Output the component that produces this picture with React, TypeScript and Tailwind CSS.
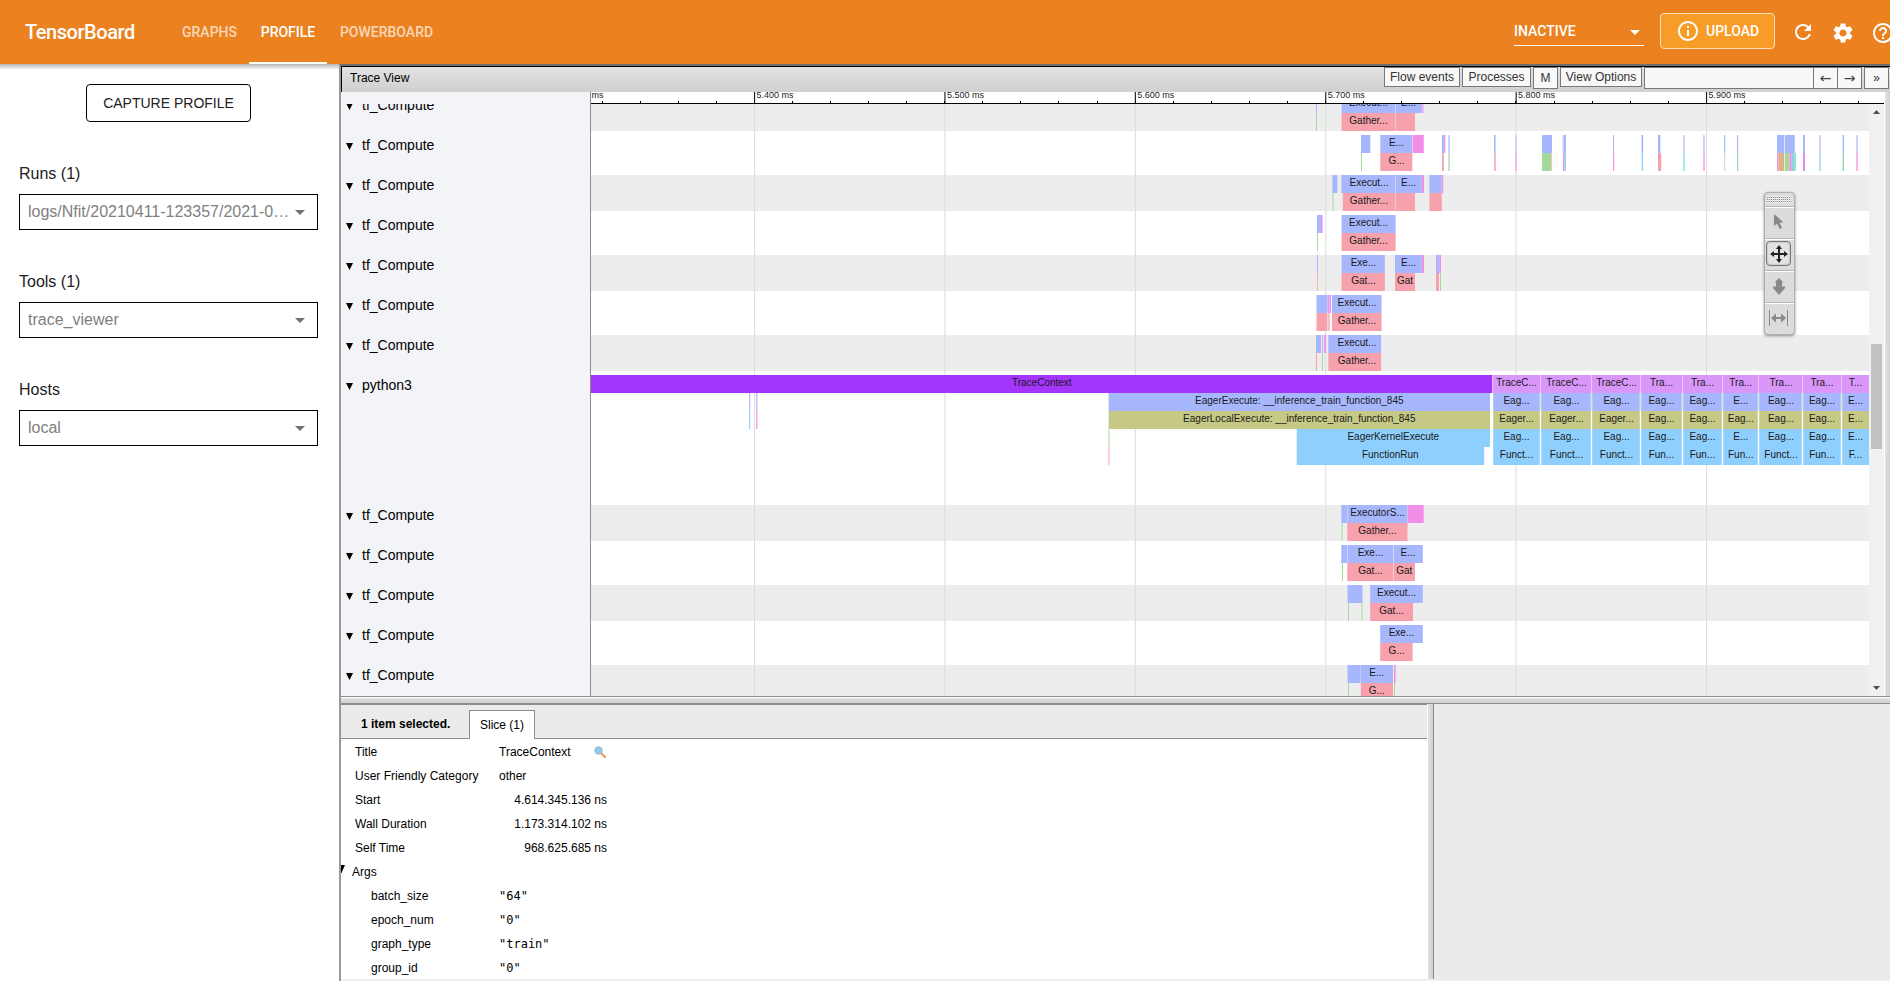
import React from "react";
import { MdInfoOutline, MdRefresh, MdSettings, MdHelpOutline } from "react-icons/md";

const B = "#a7b7fd";
const R = "#f6a1ac";
const P = "#f28ee8";
const G = "#a4d99b";
const O = "#f3b9a2";
const LB = "#cdd5fc";
const LG = "#c9e6c4";
const LP = "#f6b6f0";
const SKY = "#8fcffd";

// [x, width, fill, label?, label centre?]
type Slice = [number, number, string, string?, number?];
type Track = { y: number; rows: Slice[][] };

const tracks: Track[] = [
  { y: 95, rows: [
    [[1316, 1, B], [1341.6, 53.6, B, "Execut...", 1368.5], [1395.6, 26.6, B, "E...", 1408.5], [1422, 2, LP]],
    [[1316, 1, G], [1341.6, 53.6, R, "Gather...", 1368.5], [1395.6, 19.4, R]],
  ] },
  { y: 135, rows: [
    [[1361, 9.3, B], [1380.3, 32, B, "E...", 1396.5], [1412.6, 11.2, P], [1442, 2.2, B], [1444.2, 1.2, P], [1448, 2, LB], [1494, 1, B], [1495, 1, LB], [1515, 2, LB], [1542, 10, B], [1562.5, 1, LB], [1563.5, 2.5, B], [1613, 1, B], [1641.5, 1.6, B], [1658, 2.4, B], [1683, 2, LB], [1703, 2, LB], [1724, 1.2, B], [1737, 1.2, B], [1777, 7.2, B], [1784.8, 10, B], [1803, 2, B], [1819, 2, LB], [1842.6, 1.4, B], [1856, 2, LB]],
    [[1361, 1, G], [1380.3, 32, R, "G...", 1396.5], [1442, 1.8, R], [1448, 2, LG], [1494, 1, O], [1495, 1, LP], [1515, 2, LP], [1542, 9.3, G], [1551.3, 0.8, O], [1563, 1.4, P], [1564.4, 1.6, SKY], [1613, 1.2, P], [1641.5, 1.6, "#9bd8f8"], [1658, 3.2, R], [1683, 2, "#ace9e7"], [1703, 2, LP], [1724, 1.2, LG], [1737, 1.2, "#8cdcc8"], [1777, 1.4, P], [1778.4, 5.8, "#deb184"], [1784.8, 4.8, G], [1789.6, 2.2, P], [1791.8, 2.2, "#8bd1e8"], [1794, 2, "#9be0cb"], [1803, 2, "#e08bf0"], [1819, 2, "#b5e0fb"], [1842.6, 1.4, "#8fdcaa"], [1856, 2, LP]],
  ] },
  { y: 175, rows: [
    [[1332.4, 5, B], [1341.3, 53.9, B, "Execut...", 1369], [1395.6, 26.2, B, "E...", 1408.5], [1422, 2, P], [1429.4, 12.2, B], [1441.7, 1.5, P]],
    [[1332, 2, LG], [1342.8, 52.4, R, "Gather...", 1369], [1395.6, 19.4, R], [1429.4, 12.4, R]],
  ] },
  { y: 215, rows: [
    [[1317, 4, B], [1321, 1.6, P], [1341.6, 54, B, "Execut...", 1368.5]],
    [[1317, 1, G], [1341.6, 54, R, "Gather...", 1368.5]],
  ] },
  { y: 255, rows: [
    [[1317, 1, B], [1341.6, 43.2, B, "Exe...", 1363.5], [1395, 26.8, B, "E...", 1408.5], [1422, 2, P], [1436, 3.3, B], [1439.3, 1.7, P]],
    [[1317, 1, O], [1341.6, 43.2, R, "Gat...", 1363.5], [1395, 20, R, "Gat", 1405], [1436, 3, R], [1440, 1, G]],
  ] },
  { y: 295, rows: [
    [[1316.5, 10.8, B], [1327.3, 2.4, "#d3a4f6"], [1329.7, 1.4, P], [1332, 49.6, B, "Execut...", 1357]],
    [[1316.5, 10.8, R], [1327.6, 2.2, "#f6b9bd"], [1332, 49.6, R, "Gather...", 1357]],
  ] },
  { y: 335, rows: [
    [[1316, 5, B], [1322, 1, B], [1324, 2, P], [1328.4, 52.8, B, "Execut...", 1357]],
    [[1316, 1, R], [1322, 1, G], [1328.4, 52.8, R, "Gather...", 1357]],
  ] },
  { y: 505, rows: [
    [[1341.3, 5.9, B], [1347.5, 60, B, "ExecutorS...", 1377.5], [1407.7, 16, P]],
    [[1341, 2, LG], [1347.3, 60.2, R, "Gather...", 1377.5]],
  ] },
  { y: 545, rows: [
    [[1341.3, 5.9, B], [1347.5, 45.7, B, "Exe...", 1370.5], [1393.6, 29.2, B, "E...", 1408]],
    [[1342, 1, G], [1347.3, 45.9, R, "Gat...", 1370.5], [1393.6, 21.4, R, "Gat", 1404.3]],
  ] },
  { y: 585, rows: [
    [[1347.5, 15, B], [1370.2, 52.6, B, "Execut...", 1396.5]],
    [[1348, 1, G], [1361, 2, LG], [1370.2, 42.8, R, "Gat...", 1391.5]],
  ] },
  { y: 625, rows: [
    [[1380.2, 42.6, B, "Exe...", 1401.5]],
    [[1380.2, 32.4, R, "G...", 1396.5]],
  ] },
  { y: 665, rows: [
    [[1347.5, 13, B], [1360.8, 32.2, B, "E...", 1376.8], [1394, 1.6, P]],
    [[1348, 1, G], [1360.8, 32.2, R, "G...", 1376.8], [1394, 1, G]],
  ] },
];

const stepEdges = [1492.6, 1540.6, 1591.6, 1640.6, 1682.6, 1722.6, 1758.6, 1802.6, 1841.6, 1869];
const stepCentres = [1516.5, 1566.5, 1616.5, 1661.5, 1702.5, 1740.8, 1781, 1822, 1855.5];
const stepLabels = [
  ["TraceC...", "TraceC...", "TraceC...", "Tra...", "Tra...", "Tra...", "Tra...", "Tra...", "T..."],
  ["Eag...", "Eag...", "Eag...", "Eag...", "Eag...", "E...", "Eag...", "Eag...", "E..."],
  ["Eager...", "Eager...", "Eager...", "Eag...", "Eag...", "Eag...", "Eag...", "Eag...", "E..."],
  ["Eag...", "Eag...", "Eag...", "Eag...", "Eag...", "E...", "Eag...", "Eag...", "E..."],
  ["Funct...", "Funct...", "Funct...", "Fun...", "Fun...", "Fun...", "Funct...", "Fun...", "F..."],
];
const stepFills = ["#da97fa", B, "#c6c886", SKY, SKY];

const steps = (level: number): Slice[] =>
  stepLabels[level].map((label, i) => {
    const left = stepEdges[i] + (level === 0 ? 0.2 : 0.6);
    const right = stepEdges[i + 1] - (i === 8 ? 0 : level === 0 ? 0.2 : 0.8);
    return [left, right - left, stepFills[level], label, stepCentres[i]];
  });

tracks.push({
  y: 375,
  rows: [
    [[591, 901.3, "#a435fa", "TraceContext", 1041.8], ...steps(0)],
    [[749, 1, "#b9c3f8"], [750, 1, "#e6eafe"], [756, 1, "#b9c3f8"], [757, 1, "#dbe1fd"], [1108.6, 381.4, B, "EagerExecute: __inference_train_function_845", 1299.3], ...steps(1), ...stepEdges.slice(1, 9).map((x): Slice => [x - 0.8, 1, LG])],
    [[749, 1, "#a8d4f8"], [750, 1, "#def1fe"], [756, 1, "#f3a6ea"], [757, 1, "#f9d3f5"], [1108.6, 381.4, "#c6c886", "EagerLocalExecute: __inference_train_function_845", 1299.3], ...steps(2)],
    [[1108, 2, "#d2ecce"], [1296.7, 193.3, SKY, "EagerKernelExecute", 1393.3], ...steps(3)],
    [[1108, 2, "#fad0d4"], [1296.7, 187.5, SKY, "FunctionRun", 1390.3], ...steps(4)],
  ],
});

const stripes = [95, 175, 255, 335, 505, 585, 665];
const majors = [754.5, 944.9, 1135.3, 1325.7, 1516.1, 1706.5];
const majorLabels = ["5.400 ms", "5.500 ms", "5.600 ms", "5.700 ms", "5.800 ms", "5.900 ms"];

function Timeline() {
  return (
    <svg viewBox="591 104 1278 592" className="block h-[592px] w-[1278px] shrink-0 bg-white font-['Liberation_Sans',sans-serif] text-[10px]">
      {stripes.map((y) => <rect key={y} x={591} y={y} width={1278} height={36} fill="#ededed" />)}
      {majors.map((x) => <rect key={x} x={x - 0.5} y={104} width={1.1} height={592} fill="#dedede" />)}
      {tracks.map((t) => t.rows.map((row, r) => row.map(([x, w, fill, label, cx], i) => (
        <g key={`${t.y}-${r}-${i}`}>
          <rect x={x} y={t.y + r * 18} width={w} height={18} fill={fill} />
          {label && <text x={cx} y={t.y + r * 18 + 10.6} textAnchor="middle" fill="#1a1a1a">{label}</text>}
        </g>
      ))))}
    </svg>
  );
}

function Ruler() {
  const minors = Array.from({ length: 34 }, (_, i) => 602 + i * 38.08).filter((x) => x < 1884);
  return (
    <svg viewBox="591 92 1293 12" className="block h-3 w-[1293px] shrink-0 bg-white font-['Liberation_Sans',sans-serif] text-[9px]">
      <text x={591.5} y={97.5} fill="#222">ms</text>
      {minors.map((x) => <rect key={x} x={Math.round(x - 0.5)} y={101} width={1} height={2} fill="#000" />)}
      {majors.map((x, i) => (
        <g key={x}>
          <rect x={x - 0.5} y={92} width={1.1} height={12} fill="#111" />
          <text x={x + 2} y={97.5} fill="#222">{majorLabels[i]}</text>
        </g>
      ))}
      <rect x={591} y={103} width={1293} height={1} fill="#000" />
    </svg>
  );
}

function TrackLabel({ children, tall = false }: { children: string; tall?: boolean }) {
  return (
    <div className={tall ? "h-[130px]" : "h-10"}>
      <div className="flex h-5 items-center">
        <svg viewBox="0 0 7 7" className="mt-0.5 ml-[5px] h-[7px] w-[7px]"><path d="M0 0h7L3.5 7z" /></svg>
        <span className="ml-[9px] text-sm leading-5">{children}</span>
      </div>
    </div>
  );
}

function Select({ label, value }: { label: string; value: string }) {
  return (
    <div className="mb-[39px] font-['Liberation_Sans',sans-serif]">
      <div className="flex h-6 items-center pt-0.5 text-base text-[#212121]">{label}</div>
      <div className="mt-[9px] flex h-9 w-[299px] items-center border border-black pl-2 text-base text-[#808080]">
        <span className="w-[261px] whitespace-nowrap">{value}</span>
        <svg viewBox="0 0 10 5" className="ml-[6px] h-[5px] w-[10px]" fill="#737373"><path d="M0 0h10L5 5z" /></svg>
      </div>
    </div>
  );
}

function Palette() {
  return (
    <div className="absolute top-[100px] left-[1423px] flex h-[143px] w-[31px] flex-col rounded-[4px] border border-[#b0b0b0] bg-[#dcdcdc] shadow-[0_1px_3px_rgba(0,0,0,0.4)]">
      <div className="flex h-[14px] items-center justify-center border-b border-[#b5b5b5] pr-0.5">
        <svg viewBox="0 0 24 7" className="h-[7px] w-6">
          {[0, 2, 4, 6].map((y) => <path key={y} d={`M0 ${y + 0.5}H24`} stroke="#fff" strokeDasharray="1 1" />)}
          {[1, 3, 5].map((y) => <path key={y} d={`M0 ${y + 0.5}H24`} stroke="#888" strokeDasharray="1 1" />)}
        </svg>
      </div>
      <div className="flex h-8 items-center justify-center border-t border-b border-t-white border-b-[#b5b5b5] pr-0.5 pb-0.5">
        <svg viewBox="0 0 11 16" className="h-4 w-[11px]" fill="#888"><path d="M1 0v12l3-2.500 2.800 5.500 2.200-1L6.500 8.500H10.500z" /></svg>
      </div>
      <div className="flex h-8 items-center border-t border-b border-t-white border-b-[#b5b5b5] pb-[3px]">
        <div className="ml-px flex h-[25px] w-[25px] items-center justify-center rounded-[4px] border border-[#777] bg-[#e3e3e3] shadow-[inset_0_0_2px_#999]">
          <svg viewBox="0 0 18 18" className="h-[18px] w-[18px] shrink-0" fill="#222"><path d="M9 0l3 4h-2v4h4V6l4 3-4 3v-2h-4v4h2l-3 4-3-4h2v-4H4v2L0 9l4-3v2h4V4H6z" /></svg>
        </div>
      </div>
      <div className="flex h-8 items-center justify-center border-t border-b border-t-white border-b-[#b5b5b5] pr-0.5 pb-0.5">
        <svg viewBox="0 0 12 17" className="h-[17px] w-3" fill="#888"><path d="M6 0l4.300 4.200H9V8.500h3V10L6 17 0 10V8.500h3V4.200H1.700z" /></svg>
      </div>
      <div className="flex h-[30px] items-center justify-center border-t border-t-white pr-0.5 pb-0.5">
        <svg viewBox="0 0 19 16" className="h-4 w-[19px]" fill="#888"><path d="M0 0h1v16H0zM18 0h1v16h-1zM2 8l5-4.500V7h5V3.500L17 8l-5 4.500V9H7v3.500z" /></svg>
      </div>
    </div>
  );
}

function DetailRow({ name, value }: { name: string; value: React.ReactNode }) {
  return (
    <div className="flex h-6 items-center text-xs">
      <span className="ml-[14px] w-[144px]">{name}</span>
      <span className="w-[108px]">{value}</span>
    </div>
  );
}

const args: [string, string][] = [
  ["batch_size", '"64"'],
  ["epoch_num", '"0"'],
  ["graph_type", '"train"'],
  ["group_id", '"0"'],
];

const toolButton = "flex items-center justify-center border border-[#777] bg-[#f8f8f8] text-xs text-[#333]";

export default function App() {
  return (
    <div className="flex h-[981px] w-[1890px] flex-col overflow-hidden bg-white font-[Roboto,sans-serif]">
      <header className="z-10 flex h-16 shrink-0 items-center bg-[#ec811f] text-white">
        <h1 className="ml-[25px] w-[145px] shrink-0 text-[20px] font-medium tracking-[-0.45px]">TensorBoard</h1>
        <nav className="flex h-16 shrink-0 text-[14px] font-medium">
          <span className="flex w-[79px] items-center justify-center text-white/70">GRAPHS</span>
          <span className="flex w-[78px] items-center justify-center border-b-2 border-white pt-0.5">PROFILE</span>
          <span className="flex w-[119px] items-center justify-center text-white/70">POWERBOARD</span>
        </nav>
        <div className="ml-[1068px] flex h-[27px] w-[130px] shrink-0 items-start justify-between border-b border-white pr-1 text-[14px]">
          <span className="leading-[25px] font-medium">INACTIVE</span>
          <svg viewBox="0 0 10 5" className="mt-[11px] h-[5px] w-[10px]" fill="#fff"><path d="M0 0h10L5 5z" /></svg>
        </div>
        <button className="mb-0.5 ml-4 flex h-9 w-[115px] shrink-0 items-center rounded-[4px] border border-[#fce0bd] bg-[#f79c27] pl-[15px] text-[14px] font-medium">
          <MdInfoOutline className="h-6 w-6 shrink-0" />
          <span className="ml-1.5">UPLOAD</span>
        </button>
        <MdRefresh className="ml-4 h-6 w-6 shrink-0" />
        <MdSettings className="mt-0.5 ml-4 h-6 w-6 shrink-0" />
        <MdHelpOutline className="mt-0.5 ml-4 h-6 w-6 shrink-0" />
      </header>

      <div className="flex h-[917px]">
        <aside className="w-[339px] shrink-0 bg-[linear-gradient(#b5b5b5,#fff_6px)] pt-5 pl-[19px]">
          <button className="mb-10 ml-[67px] flex h-[38px] w-[165px] items-center justify-center rounded-[4px] border border-black font-['Liberation_Sans',sans-serif] text-sm text-[#212121]">CAPTURE PROFILE</button>
          <div className="-mt-px">
            <Select label="Runs (1)" value="logs/Nfit/20210411-123357/2021-0…" />
            <Select label="Tools (1)" value="trace_viewer" />
            <Select label="Hosts" value="local" />
          </div>
        </aside>

        <main className="flex w-[1551px] shrink-0 flex-col border-t-2 border-l-2 border-t-[#6f6f6f] border-l-[#999] font-['Liberation_Sans',sans-serif] text-black">
          <div className="flex h-[26px] shrink-0 items-start border-t border-l border-black bg-linear-to-b from-[#e2e2e2] to-[#d0d0d0]">
            <span className="ml-2 w-[1034px] shrink-0 pt-[3px] text-xs leading-4">Trace View</span>
            <div className={`${toolButton} h-5 w-[76px] shrink-0`}>Flow events</div>
            <div className={`${toolButton} ml-0.5 h-5 w-[69px] shrink-0`}>Processes</div>
            <div className={`${toolButton} ml-0.5 h-[22px] w-[25px] shrink-0`}>M</div>
            <div className={`${toolButton} ml-0.5 h-5 w-[82px] shrink-0`}>View Options</div>
            <div className="ml-0.5 flex h-[22px] w-[218px] shrink-0 justify-end border border-[#777] bg-[#f8f8f8] font-['DejaVu_Sans',sans-serif] text-[14px] text-[#444]">
              <span className="flex w-6 items-center justify-center border-l border-[#777] leading-5">←</span>
              <span className="flex w-6 items-center justify-center border-l border-[#777] leading-5">→</span>
            </div>
            <div className={`${toolButton} ml-0.5 h-[22px] w-[25px] shrink-0`}>»</div>
          </div>

          <div className="relative flex h-[604px] shrink-0">
            <div className="flex h-full w-[250px] shrink-0 flex-col border-r border-[#8e8e8e] bg-[#f3f4f7] pt-3">
              <div className="h-[592px] overflow-hidden">
                <div className="-mt-[9px]">
                  {Array.from({ length: 7 }, (_, i) => <TrackLabel key={i}>tf_Compute</TrackLabel>)}
                  <TrackLabel tall>python3</TrackLabel>
                  {Array.from({ length: 5 }, (_, i) => <TrackLabel key={i}>tf_Compute</TrackLabel>)}
                </div>
              </div>
            </div>
            <div className="flex w-[1293px] shrink-0 flex-col">
              <Ruler />
              <div className="flex">
                <Timeline />
                <div className="flex h-[592px] w-[15px] shrink-0 flex-col items-center bg-[#f1f1f1]">
                  <svg viewBox="0 0 7 4" className="mt-[6px] h-1 w-[7px]" fill="#505050"><path d="M0 4h7L3.500 0z" /></svg>
                  <div className="mt-[230px] h-[105px] w-[11px] bg-[#c1c1c1]" />
                  <svg viewBox="0 0 7 4" className="mt-[237px] h-1 w-[7px]" fill="#505050"><path d="M0 0h7L3.500 4z" /></svg>
                </div>
              </div>
            </div>
            <div className="w-1.5 border-l border-white bg-linear-to-r from-[#e2e2e2] to-[#cfcfcf]" />
            <Palette />
          </div>

          <div className="h-2 shrink-0 border-t border-b border-[#8e8e8e] bg-[linear-gradient(#fff_1px,#e2e2e2_1px,#cfcfcf)]" />

          <div className="flex h-[275px] shrink-0">
            <section className="flex w-[1086px] shrink-0 flex-col border-t border-[#8e8e8e] bg-white">
              <div className="flex h-[34px] shrink-0 items-end border-b border-[#8e8e8e] bg-[#ebebeb] text-xs">
                <span className="ml-5 w-[108px] leading-7 font-bold">1 item selected.</span>
                <span className="-mb-px flex h-[29px] w-[66px] items-center justify-center border border-b-0 border-[#8e8e8e] bg-white">Slice (1)</span>
              </div>
              <div className="flex flex-col">
                <div className="flex h-[25px] items-center text-xs">
                  <span className="ml-[14px] w-[144px]">Title</span>
                  <span className="w-[95px]">TraceContext</span>
                  <svg viewBox="0 0 12 12" className="h-3 w-3"><path d="M7.500 7.500l3.500 3.500" stroke="#eb9a3c" strokeWidth="2" strokeLinecap="round" /><circle cx="4.500" cy="4.500" r="3.800" fill="#8ecbf0" stroke="#a5b9c8" strokeWidth="1" /></svg>
                </div>
                <DetailRow name="User Friendly Category" value="other" />
                <DetailRow name="Start" value={<span className="block text-right">4.614.345.136 ns</span>} />
                <DetailRow name="Wall Duration" value={<span className="block text-right">1.173.314.102 ns</span>} />
                <DetailRow name="Self Time" value={<span className="block text-right">968.625.685 ns</span>} />
                <div className="flex h-6 items-center text-xs">
                  <svg viewBox="0 0 4 8" className="mb-1.5 h-2 w-1"><path d="M0 0h4L0.500 8H0z" /></svg>
                  <span className="ml-[7px]">Args</span>
                </div>
                {args.map(([k, v]) => (
                  <div key={k} className="flex h-6 items-center text-xs">
                    <span className="ml-[30px] w-32">{k}</span>
                    <span className="font-['DejaVu_Sans_Mono',monospace]">{v}</span>
                  </div>
                ))}
              </div>
            </section>
            <div className="w-[7px] shrink-0 border-r border-l border-r-[#8e8e8e] border-l-white bg-linear-to-r from-[#e2e2e2] to-[#cfcfcf]" />
            <div className="grow bg-[#ebebeb]" />
          </div>
          <div className="h-0.5 shrink-0 bg-[#eee]" />
        </main>
      </div>
    </div>
  );
}
